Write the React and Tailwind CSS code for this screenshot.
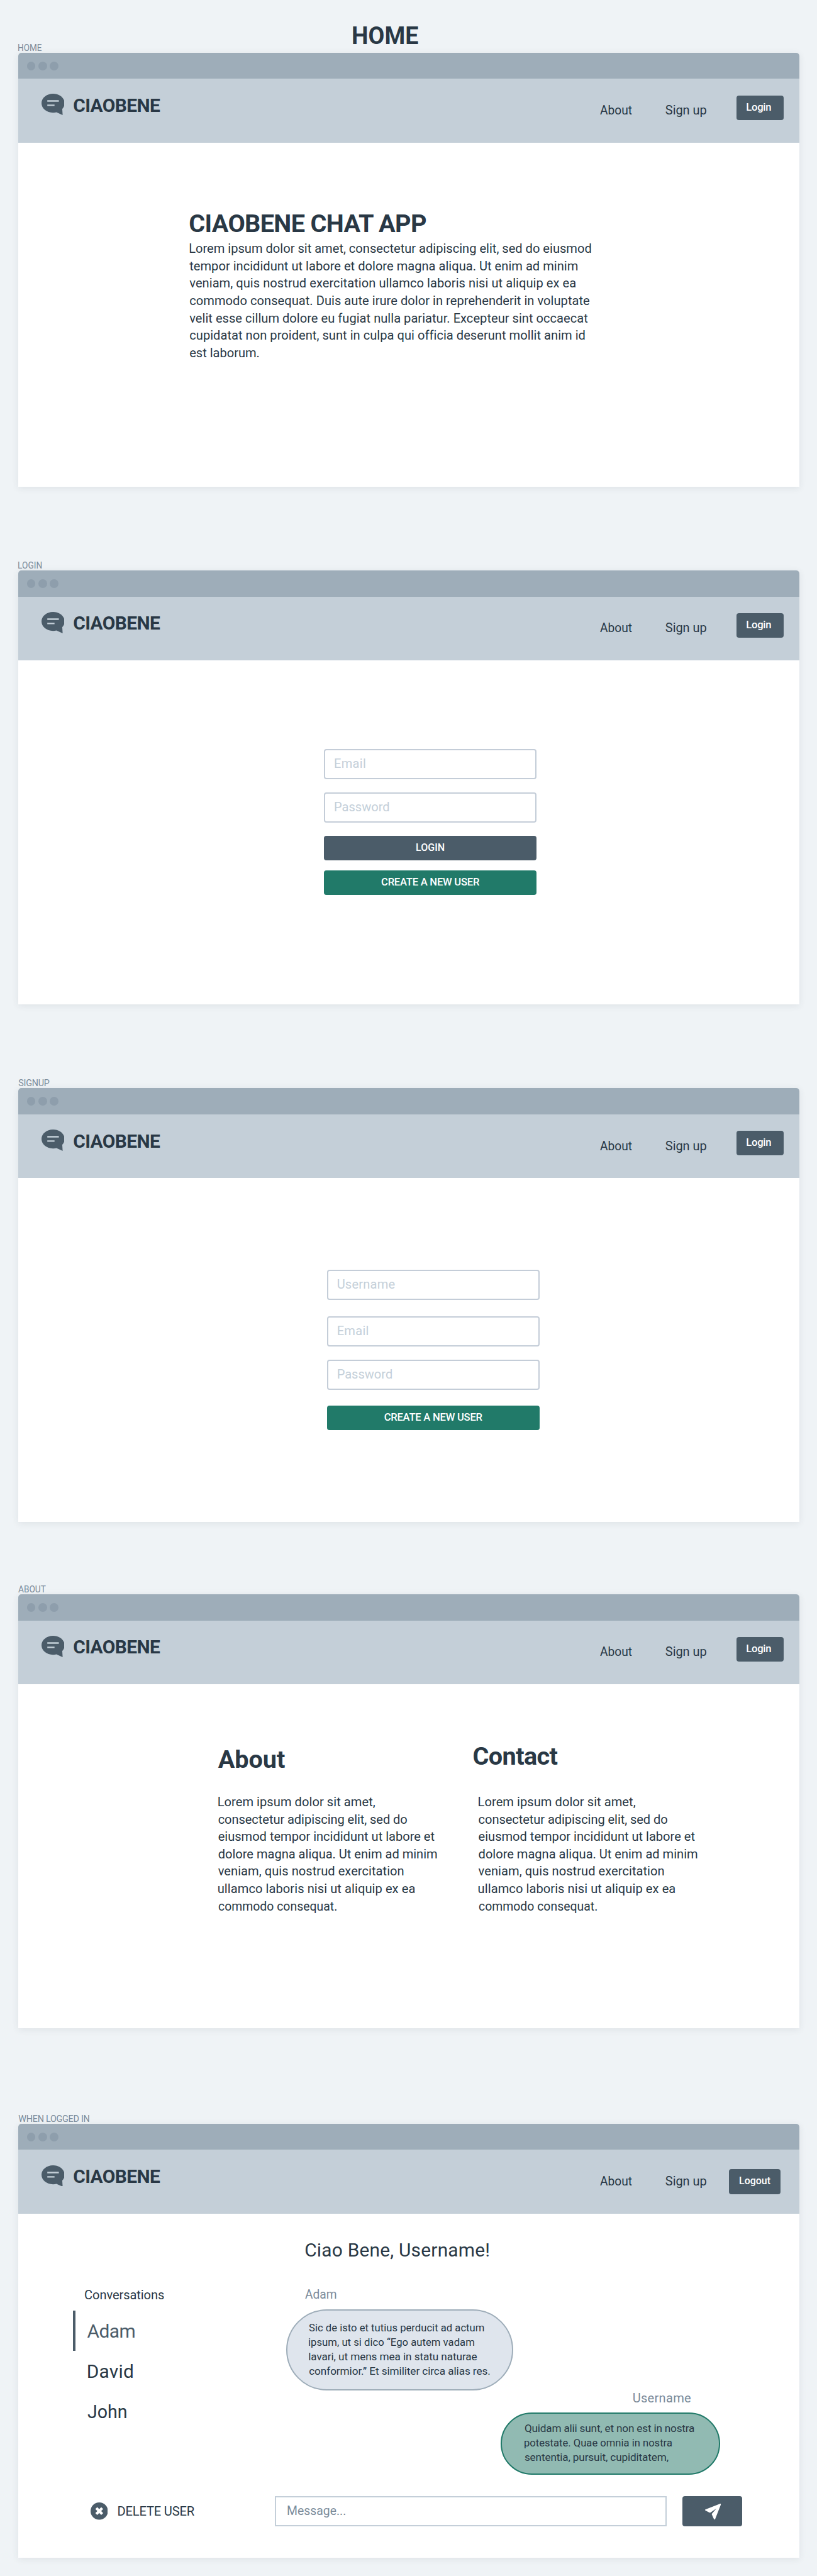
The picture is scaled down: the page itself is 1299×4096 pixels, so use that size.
import { useLayoutEffect, useRef } from "react";

/* One design unit; every spacing utility below is a multiple of it. */
const UNIT = 0.57492;

/* A single line of text whose ink spans `w` design units: short lines are
   tracked out, long ones are condensed. */
function Line({ w, className = "", children }) {
  const ref = useRef(null);
  useLayoutEffect(() => {
    const el = ref.current;
    const cs = getComputedStyle(el);
    const ctx = document.createElement("canvas").getContext("2d");
    ctx.font = `${cs.fontWeight} ${cs.fontSize} ${cs.fontFamily}`;
    const m = ctx.measureText(children);
    const ink = m.actualBoundingBoxLeft + m.actualBoundingBoxRight;
    const target = w * UNIT;
    el.style.textIndent = `${m.actualBoundingBoxLeft}px`;
    if (target / ink < 0.97) {
      el.style.transform = `scaleX(${target / ink})`;
    } else {
      el.style.letterSpacing = `${(target - ink) / (children.length - 1)}px`;
    }
  }, [w, children]);
  return (
    <span
      ref={ref}
      className={"block shrink-0 origin-left translate-y-px whitespace-nowrap " + className}
      style={{ width: w * UNIT }}
    >
      {children}
    </span>
  );
}

const BODY = "text-[calc(var(--spacing)*35)]";
const SMALL = "text-[calc(var(--spacing)*29)]";
const LARGE = "text-[calc(var(--spacing)*52)]";
const TITLE = "text-[calc(var(--spacing)*69)] font-bold";

function Paragraph({ lines, className }) {
  return (
    <div className={className}>
      {lines.map(([text, w]) => (
        <Line key={text} w={w}>
          {text}
        </Line>
      ))}
    </div>
  );
}

function ChatIcon() {
  return (
    <svg viewBox="0 0 64 59" className="mt-42 h-59 w-64 shrink-0">
      <path
        fill="#4b5c69"
        d="M32 0C49.7 0 64 11.6 64 26.2c0 6-2.4 11.6-6.6 16L58.5 59 41.3 51.4c-3 .8-6 1.1-9.3 1.1C14.3 52.500 0 40.800 0 26.200S14.300 0 32 0Z"
      />
      <path fill="#c4cfd8" d="M16 18h32v4H16zM16 30h20v4H16z" />
    </svg>
  );
}

function Header({ loggedIn }) {
  return (
    <header
      className={
        "flex h-176 items-start bg-[#c4cfd8] pl-64 " + (loggedIn ? "pr-52" : "pr-42")
      }
    >
      <ChatIcon />
      <Line w={239.5} className={"mt-43 ml-26 leading-60 font-bold " + LARGE}>
        CIAOBENE
      </Line>
      <nav className={"ml-auto flex items-start " + BODY}>
        <Line w={88} className="mt-62 mr-92 leading-48">
          About
        </Line>
        <Line w={114} className={"mt-62 leading-48 " + (loggedIn ? "mr-62" : "mr-82")}>
          Sign up
        </Line>
        <button
          className={
            "flex h-68 rounded-[4px] bg-[#4b5c69] pl-29 leading-64 font-medium text-white " +
            SMALL +
            (loggedIn ? " mt-54 w-142" : " mt-46 w-132")
          }
        >
          {loggedIn ? <Line w={86}>Logout</Line> : <Line w={68}>Login</Line>}
        </button>
      </nav>
    </header>
  );
}

function Frame({ label, labelWidth, loggedIn, className = "", children }) {
  return (
    <section className={"ml-50 w-2160 " + className}>
      <Line
        w={labelWidth}
        className="ml-1 text-[calc(var(--spacing)*25)] leading-30 text-[#7b8b9a]"
      >
        {label}
      </Line>
      <div className="h-1200 rounded-t-[5px] bg-white shadow-[0_2px_12px_rgba(41,56,69,0.09)]">
        <div className="flex h-72 items-center gap-8 rounded-t-[5px] bg-[#9eadb9] pl-24">
          <i className="size-24 rounded-full bg-[#8e9eac]" />
          <i className="size-24 rounded-full bg-[#8e9eac]" />
          <i className="size-24 rounded-full bg-[#8e9eac]" />
        </div>
        <Header loggedIn={loggedIn} />
        {children}
      </div>
    </section>
  );
}

function Field({ w, className = "", children }) {
  return (
    <div
      className={
        "h-84 w-588 rounded-[4px] border-2 border-[#c4cdd8] pl-26 leading-72 text-[#c4cfd9] " +
        BODY +
        " " +
        className
      }
    >
      <Line w={w}>{children}</Line>
    </div>
  );
}

function WideButton({ w, className, children }) {
  return (
    <button
      className={
        "flex h-68 w-588 justify-center rounded-[4px] leading-64 font-medium text-white " +
        SMALL +
        " " +
        className
      }
    >
      <Line w={w}>{children}</Line>
    </button>
  );
}

const HOME_TEXT = [
  ["Lorem ipsum dolor sit amet, consectetur adipiscing elit, sed do eiusmod", 1110],
  ["tempor incididunt ut labore et dolore magna aliqua. Ut enim ad minim", 1074],
  ["veniam, quis nostrud exercitation ullamco laboris nisi ut aliquip ex ea", 1068],
  ["commodo consequat. Duis aute irure dolor in reprehenderit in voluptate", 1106],
  ["velit esse cillum dolore eu fugiat nulla pariatur. Excepteur sint occaecat", 1101],
  ["cupidatat non proident, sunt in culpa qui officia deserunt mollit anim id", 1090],
  ["est laborum.", 192],
];

const ABOUT_TEXT = [
  ["Lorem ipsum dolor sit amet,", 435],
  ["consectetur adipiscing elit, sed do", 523],
  ["eiusmod tempor incididunt ut labore et", 598],
  ["dolore magna aliqua. Ut enim ad minim", 606],
  ["veniam, quis nostrud exercitation", 513],
  ["ullamco laboris nisi ut aliquip ex ea", 544],
  ["commodo consequat.", 327],
];

const ADAM_TEXT = [
  ["Sic de isto et tutius perducit ad actum", 484],
  ["ipsum, ut si dico “Ego autem vadam", 457],
  ["lavari, ut mens mea in statu naturae", 465],
  ["conformior.” Et similiter circa alias res.", 501],
];

const USER_TEXT = [
  ["Quidam alii sunt, et non est in nostra", 470],
  ["potestate. Quae omnia in nostra", 408],
  ["sententia, pursuit, cupiditatem,", 398],
];

function Sidebar() {
  return (
    <aside className="w-590 pl-152 pt-200">
      <Line w={219} className={"ml-33 leading-48 " + BODY}>
        Conversations
      </Line>
      <div className={"mt-20 leading-111 " + LARGE}>
        <div className="h-112 border-l-[4.6px] border-[#4b5c69] pl-32 text-[#4b5c69]">
          <Line w={132}>Adam</Line>
        </div>
        <div className="h-112 pl-41">
          <Line w={124}>David</Line>
        </div>
        <div className="h-112 pl-40">
          <Line w={108}>John</Line>
        </div>
      </div>
      <div className="mt-196 ml-48 flex items-center">
        <svg viewBox="0 0 48 48" className="size-48">
          <circle cx="24" cy="24" r="24" fill="#4b5c69" />
          <path d="M15.800 15.800 32.200 32.200M32.200 15.800 15.800 32.200" stroke="#fff" strokeWidth="7.500" />
        </svg>
        <Line w={213} className={"ml-28 leading-48 " + BODY}>
          DELETE USER
        </Line>
      </div>
    </aside>
  );
}

function Conversation() {
  return (
    <main className="flex-1 pt-60">
      <Line w={508} className={"ml-204 leading-80 " + LARGE}>
        Ciao Bene, Username!
      </Line>
      <Line w={87} className={"mt-59 ml-203 leading-48 text-[#7b8b9a] " + BODY}>
        Adam
      </Line>
      <div className="mt-19 ml-152 h-224 w-628 rounded-full border-2 border-[#9eadb9] bg-[#dfe5ed] pl-59 pt-25">
        <Paragraph
          lines={ADAM_TEXT}
          className="text-[calc(var(--spacing)*30)] leading-40"
        />
      </div>
      <Line w={159} className={"-mt-4 ml-1111 leading-48 text-[#7b8b9a] " + BODY}>
        Username
      </Line>
      <div className="mt-16 ml-744 h-172 w-608 rounded-full border-2 border-[#217a69] bg-[#91bab2] pl-63 pt-20">
        <Paragraph
          lines={USER_TEXT}
          className="text-[calc(var(--spacing)*30)] leading-40"
        />
      </div>
      <div className="mt-60 ml-120 flex gap-44">
        <div
          className={
            "h-84 w-1084 border-2 border-[#c4cfd9] pl-32 leading-73 text-[#7b8b9a] " + BODY
          }
        >
          <Line w={160}>Message...</Line>
        </div>
        <button className="flex h-84 w-164 rounded-[4px] bg-[#4b5c69] pt-20 pl-62">
          <svg viewBox="0 0 44 44" className="size-44" fill="#fff">
            <path d="M42 .2.900 16.300C-.2 16.800-.3 18 .7 18.700L12.500 24.700c1 .5 2 .4 2.800-.3L31.700 13 19.300 27.500c-.7.900-.9 1.700-.5 2.700l6 12.700c.6 1.300 2.500 1.300 3 0L43.900 2C44.300.7 43.300-.3 42 .2Z" />
          </svg>
        </button>
      </div>
    </main>
  );
}

export default function App() {
  return (
    <div className="h-[4096px] w-[1299px] overflow-hidden bg-[#eff3f6] font-[Roboto,sans-serif] text-[#293845] [--spacing:0.57492px]">
      <div className="h-116 pt-64 pl-976">
        <Line w={181} className={"leading-67 " + TITLE}>
          HOME
        </Line>
      </div>

      <Frame label="HOME" labelWidth={65}>
        <div className="pt-183 pl-474">
          <Line w={657} className={"leading-80 " + TITLE}>
            CIAOBENE CHAT APP
          </Line>
          <Paragraph lines={HOME_TEXT} className={"mt-6 leading-48 " + BODY} />
        </div>
      </Frame>

      <Frame label="LOGIN" labelWidth={66} className="mt-202">
        <div className="flex flex-col pt-246 pl-846">
          <Field w={85}>Email</Field>
          <Field w={150} className="mt-36">
            Password
          </Field>
          <WideButton w={77} className="mt-36 bg-[#4b5c69]">
            LOGIN
          </WideButton>
          <WideButton w={273} className="mt-28 bg-[#217a69]">
            CREATE A NEW USER
          </WideButton>
        </div>
      </Frame>

      <Frame label="SIGNUP" labelWidth={86} className="mt-202">
        <div className="flex flex-col pt-254 pl-854">
          <Field w={158}>Username</Field>
          <Field w={85} className="mt-44">
            Email
          </Field>
          <Field w={150} className="mt-36">
            Password
          </Field>
          <WideButton w={273} className="mt-44 bg-[#217a69]">
            CREATE A NEW USER
          </WideButton>
        </div>
      </Frame>

      <Frame label="ABOUT" labelWidth={77} className="mt-170">
        <div className="flex items-start pl-553">
          <div className="w-706 pt-167">
            <Line w={185} className={"leading-80 " + TITLE}>
              About
            </Line>
            <Paragraph lines={ABOUT_TEXT} className={"mt-54 leading-48 " + BODY} />
          </div>
          <div className="pt-159">
            <Line w={233} className={"leading-80 " + TITLE}>
              Contact
            </Line>
            <Paragraph lines={ABOUT_TEXT} className={"mt-62 ml-14 leading-48 " + BODY} />
          </div>
        </div>
      </Frame>

      <Frame label="WHEN LOGGED IN" labelWidth={197} loggedIn className="mt-234">
        <div className="flex items-start">
          <Sidebar />
          <Conversation />
        </div>
      </Frame>
    </div>
  );
}
